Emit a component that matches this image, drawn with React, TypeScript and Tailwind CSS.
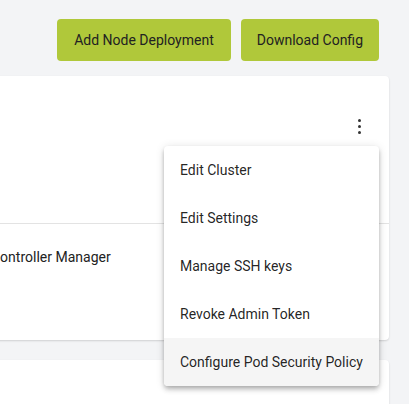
export default function App() {
  const items = [
    "Edit Cluster",
    "Edit Settings",
    "Manage SSH keys",
    "Revoke Admin Token",
    "Configure Pod Security Policy",
  ];

  return (
    <div className="relative h-[404px] w-[409px] overflow-hidden bg-[#f3f4f6] font-['Roboto',sans-serif] text-sm">
      <div className="flex justify-end gap-[10px] pr-[30px] pt-[19px]">
        <button className="h-[42px] rounded bg-[#b0c83a] px-[17px] text-[#222]">
          Add Node Deployment
        </button>
        <button className="h-[42px] rounded bg-[#b0c83a] px-[16px] text-[#222]">
          Download Config
        </button>
      </div>

      <div className="ml-[-25px] mr-[20px] mt-[15px] h-[264px] rounded bg-white shadow-[0_1px_2px_rgba(0,0,0,0.15)]">
        <div className="flex h-[148px] justify-end border-b border-[#e3e3e3] pr-[28px] pt-[43px]">
          <div className="flex flex-col gap-[3px]">
            <span className="h-[3px] w-[3px] rounded-full bg-[#333]" />
            <span className="h-[3px] w-[3px] rounded-full bg-[#333]" />
            <span className="h-[3px] w-[3px] rounded-full bg-[#333]" />
          </div>
        </div>
        <div className="pl-4 pt-[23px] text-[#222]">Controller Manager</div>
      </div>

      <div className="ml-[-25px] mr-[20px] mt-[20px] h-[100px] rounded bg-white shadow-[0_1px_2px_rgba(0,0,0,0.15)]" />

      <div className="absolute left-[164px] top-[146px] w-[215px] overflow-hidden rounded bg-white shadow-[0_2px_4px_-1px_rgba(0,0,0,0.2),0_4px_5px_0_rgba(0,0,0,0.14),0_1px_10px_0_rgba(0,0,0,0.12)]">
        {items.map((item, i) => (
          <div
            key={item}
            className={`flex h-12 items-center px-4 text-[rgba(0,0,0,0.87)] ${
              i === items.length - 1 ? "bg-[#f5f5f5]" : ""
            }`}
          >
            {item}
          </div>
        ))}
      </div>
    </div>
  );
}
